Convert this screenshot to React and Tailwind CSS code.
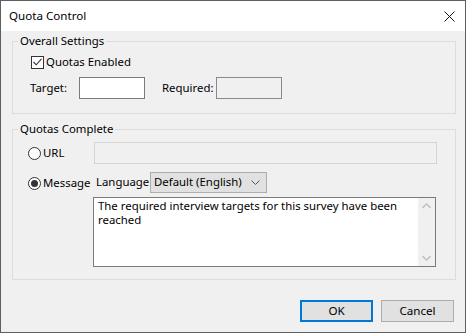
import React from 'react';

const font = { fontFamily: '"Noto Sans", "Liberation Sans", sans-serif' };

function Check() {
  return (
    <span className="flex h-[13px] w-[13px] items-center justify-center border border-[#333333] bg-white">
      <svg width="9" height="8" viewBox="0 0 9 8">
        <path d="M0.5 4 L3.2 6.8 L8.5 0.8" fill="none" stroke="#333333" strokeWidth="1.1" />
      </svg>
    </span>
  );
}

function Radio({ on }) {
  return (
    <span className="flex h-[13px] w-[13px] items-center justify-center rounded-full border border-[#333333] bg-white">
      {on && <span className="h-[7px] w-[7px] rounded-full bg-[#333333]" />}
    </span>
  );
}

function Chevron({ up }) {
  return (
    <svg width="9" height="6" viewBox="0 0 9 6">
      <path d={up ? 'M0.5 5 L4.5 1 L8.5 5' : 'M0.5 1 L4.5 5 L8.5 1'} fill="none" stroke="#c2c2c2" strokeWidth="1.6" />
    </svg>
  );
}

export default function App() {
  return (
    <div className="flex h-[333px] w-[466px] flex-col border border-[#5f5f5f] bg-[#f0f0f0] text-[11.4px] leading-[16px] text-black" style={font}>
      {/* title bar */}
      <div className="flex h-[30px] shrink-0 items-center justify-between bg-white pl-[8px] pr-[10px]">
        <span className="text-[11.6px]">Quota Control</span>
        <svg width="11" height="11" viewBox="0 0 11 11">
          <path d="M0.5 0.5 L10.5 10.5 M10.5 0.5 L0.5 10.5" stroke="#111111" strokeWidth="1" />
        </svg>
      </div>

      <div className="flex flex-1 flex-col pl-[11px] pr-[9px] pt-[10px]">
        {/* Overall Settings */}
        <div className="flex flex-col border border-[#dcdcdc] pb-[14px]">
          <span className="-mt-[9px] ml-[5px] w-fit bg-[#f0f0f0] px-[2px]">Overall Settings</span>
          <div className="mt-[5px] flex h-[16px] items-center pl-[18px]">
            <Check />
            <span className="ml-[2px]">Quotas Enabled</span>
          </div>
          <div className="mt-[7px] flex h-[22px] items-center pl-[17px]">
            <span className="w-[49px]">Target:</span>
            <div className="h-[22px] w-[66px] border border-[#7a7a7a] bg-white" />
            <span className="ml-[17px] w-[54px]">Required:</span>
            <div className="h-[22px] w-[66px] border border-[#8a8a8a] bg-[#f0f0f0]" />
          </div>
        </div>

        {/* Quotas Complete */}
        <div className="mt-[15px] flex flex-col border border-[#dcdcdc] pb-[12px]">
          <span className="-mt-[9px] ml-[5px] w-fit bg-[#f0f0f0] px-[2px]">Quotas Complete</span>
          <div className="mt-[5px] flex h-[22px] items-center pl-[15px]">
            <div className="flex w-[66px] items-center">
              <Radio />
              <span className="ml-[2px]">URL</span>
            </div>
            <div className="h-[22px] w-[343px] border border-[#d4d4d4] bg-[#f0f0f0]" />
          </div>
          <div className="mt-[7px] flex h-[22px] items-center pl-[15px]">
            <div className="flex w-[66px] items-center pt-[2px]">
              <Radio on />
              <span className="ml-[2px]">Message</span>
            </div>
            <span className="w-[56px] pl-[2px]">Language</span>
            <div className="flex h-[21px] w-[117px] items-center justify-between border border-[#adadad] bg-[#e1e1e1] pl-[3px] pr-[6px]">
              <span>Default (English)</span>
              <svg width="9" height="5" viewBox="0 0 9 5">
                <path d="M0.5 0.5 L4.5 4.5 L8.5 0.5" fill="none" stroke="#555555" strokeWidth="1" />
              </svg>
            </div>
          </div>
          <div className="ml-[80px] mt-[4px] flex h-[70px] w-[343px] border border-[#7a7a7a] bg-white">
            <div className="flex-1 whitespace-nowrap pl-[4px] pt-[1px] leading-[13.5px]">
              <div>The required interview targets for this survey have been</div>
              <div>reached</div>
            </div>
            <div className="flex w-[17px] flex-col items-center justify-between bg-[#f0f0f0] py-[5px]">
              <Chevron up />
              <Chevron />
            </div>
          </div>
        </div>

        {/* buttons */}
        <div className="mr-[2px] mt-[20px] flex justify-end gap-[8px]">
          <button className="h-[22px] w-[73px] border-2 border-[#0078d7] bg-[#e1e1e1] text-[11.6px] leading-[16px]" style={font}>OK</button>
          <button className="h-[22px] w-[73px] border border-[#adadad] bg-[#e1e1e1] text-[11.6px] leading-[16px]" style={font}>Cancel</button>
        </div>
      </div>
    </div>
  );
}
